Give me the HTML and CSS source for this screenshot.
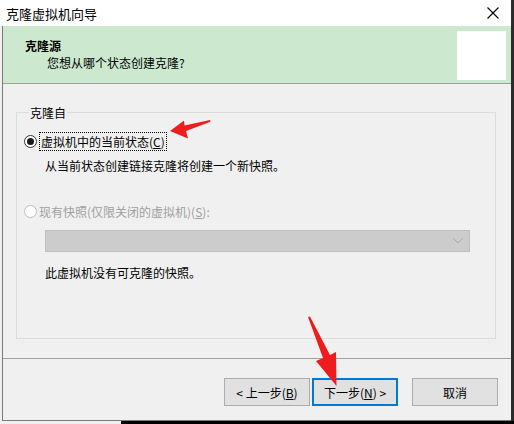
FILE: index.html
```html
<!DOCTYPE html>
<html lang="zh-CN">
  <head>
    <meta charset="UTF-8" />
    <title>克隆虚拟机向导</title>
    <link rel="stylesheet" href="styles.css">
  </head>
  <body>
    <div class="window">
      <div class="titlebar">
        <span class="title">克隆虚拟机向导</span>
        <svg class="close" width="12" height="12" viewBox="0 0 12 12">
          <path d="M0.5 0.5 L11.5 11.5 M11.5 0.5 L0.5 11.5" stroke="#000" stroke-width="1.1" />
        </svg>
      </div>

      <div class="frame">
        <div class="header">
          <div class="header-text">
            <div class="header-title">克隆源</div>
            <div class="header-sub">您想从哪个状态创建克隆?</div>
          </div>
          <div class="header-icon"></div>
        </div>

        <div class="content">
          <fieldset class="group">
            <legend>克隆自</legend>

            <div class="option">
              <span class="radio checked"></span>
              <span class="focus">虚拟机中的当前状态(<u>C</u>)</span>
            </div>
            <div class="desc first">从当前状态创建链接克隆将创建一个新快照。</div>

            <div class="option disabled">
              <span class="radio"></span>
              <span>现有快照(仅限关闭的虚拟机)(<u>S</u>):</span>
            </div>
            <div class="select">
              <svg width="10" height="6" viewBox="0 0 10 6">
                <path d="M0.5 0.5 L5 5 L9.5 0.5" fill="none" stroke="#a8a8a8" stroke-width="1" />
              </svg>
            </div>
            <div class="desc note">此虚拟机没有可克隆的快照。</div>
          </fieldset>
        </div>

        <div class="footer">
          <button class="btn">&lt; 上一步(<u>B</u>)</button>
          <button class="btn default">下一步(<u>N</u>) &gt;</button>
          <button class="btn cancel">取消</button>
        </div>
      </div>
    </div>
    <div class="taskbar"></div>

    <!-- red pointer arrows drawn over the dialog -->
    <svg class="marks" width="514" height="424" viewBox="0 0 514 424">
      <polygon fill="#ee1d1d"
        points="170,131 184,120.5 184.5,125.5 210,120 210.5,121.8 186,131 188,138.5" />
      <polygon fill="#ee1d1d"
        points="308,317 310,316.5 330,355 336,352 336.5,386 316,361 323,358" />
    </svg>
  </body>
</html>
```

FILE: styles.css
```css
* {
  margin: 0;
  padding: 0;
  box-sizing: border-box;
}

body {
  width: 514px;
  height: 424px;
  overflow: hidden;
  position: relative;
  font-family: "Noto Sans CJK SC", "Microsoft YaHei", sans-serif;
  font-size: 12px;
  color: #000;
  background: linear-gradient(to left, #2b2b2b 3px, #f0f0f0 3px);
}

.window {
  width: 511px;
}

.titlebar {
  height: 26px;
  background: #fff;
  display: flex;
  align-items: center;
  justify-content: space-between;
  padding: 0 12px 0 6px;
}

.title {
  font-size: 13px;
}

.frame {
  margin-left: 2px;
  border-left: 1px solid #7a7a7a;
  border-bottom: 1px solid #7a7a7a;
}

.header {
  height: 58px;
  background: #cce8cf;
  border-bottom: 1px solid #a0a0a0;
  display: flex;
  justify-content: space-between;
  padding: 5px 5px 0 22px;
}

.header-text {
  padding-top: 6px;
  line-height: 17px;
}

.header-title {
  font-weight: bold;
}

.header-sub {
  padding-left: 22px;
}

.header-icon {
  width: 49px;
  height: 49px;
  background: #fff;
}

.content {
  height: 275px;
  background: #f0f0f0;
  border-bottom: 1px solid #a0a0a0;
  padding: 20px 15px 0 13px;
}

.group {
  height: 235px;
  border: 1px solid #dcdcdc;
  padding: 0 0 0 7px;
}

.group legend {
  margin-left: 5px;
  padding: 0 1px;
  line-height: 17px;
}

.option {
  display: flex;
  align-items: center;
  height: 19px;
  margin-top: 11px;
}

.option.disabled {
  color: #a0a0a0;
  margin-top: 28px;
}

.radio {
  width: 13px;
  height: 13px;
  border: 1px solid #333;
  border-radius: 50%;
  background: #fff;
  margin-right: 2px;
  display: flex;
  align-items: center;
  justify-content: center;
}

.radio.checked::after {
  content: "";
  width: 7px;
  height: 7px;
  border-radius: 50%;
  background: #1a1a1a;
}

.disabled .radio {
  border-color: #bcbcbc;
}

.focus {
  border: 1px dotted #000;
  padding: 0 1px;
  line-height: 17px;
}

.desc {
  line-height: 17px;
  padding-left: 21px;
}

.desc.first {
  margin-top: 6px;
}

.select {
  margin: 9px 0 0 21px;
  width: 425px;
  height: 22px;
  background: #cccccc;
  border: 1px solid #bfbfbf;
  display: flex;
  align-items: center;
  justify-content: flex-end;
  padding-right: 6px;
}

.desc.note {
  margin-top: 12px;
}

.footer {
  height: 61px;
  background: #f0f0f0;
  display: flex;
  justify-content: flex-end;
  align-items: flex-start;
  padding: 19px 13px 0 0;
}

.btn {
  width: 86px;
  height: 28px;
  font-family: inherit;
  font-size: 12px;
  background: #e1e1e1;
  border: 1px solid #adadad;
  margin-left: 2px;
}

.btn.default {
  border: 2px solid #0078d7;
}

.btn.cancel {
  margin-left: 14px;
}

.taskbar {
  margin-left: 121px;
  height: 3px;
  background: #000;
}

.marks {
  position: absolute;
  left: 0;
  top: 0;
  pointer-events: none;
}
```
